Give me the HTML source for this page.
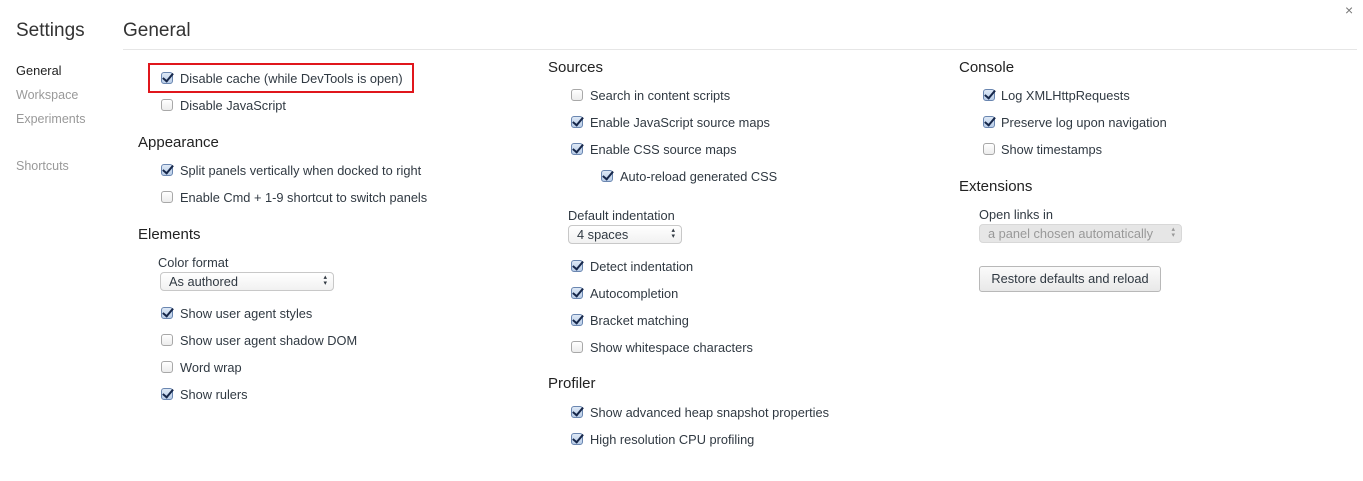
<!DOCTYPE html>
<html><head><style>
*{margin:0;padding:0;box-sizing:border-box}
body{width:1363px;height:481px;background:#fff;font-family:"Liberation Sans",sans-serif;font-size:12.8px;color:#303942;position:relative;overflow:hidden}
.a{position:absolute;white-space:nowrap;line-height:16px;padding-top:1px}
.h{font-size:15px;color:#222}
.nav{color:#999;font-size:12.5px}
.cb{position:absolute;width:12px;height:12px;border:1px solid #a8a8a8;border-radius:3px;background:linear-gradient(#fff,#ececec)}
.cb.c{border-color:#6a86b0;background:linear-gradient(#dde8f6,#b9cde8)}
.cb.c:after{content:"";position:absolute;left:3px;top:-2px;width:4px;height:9px;border:solid #16274a;border-width:0 2px 2px 0;transform:rotate(40deg)}
.sel{position:absolute;height:19px;border:1px solid #c8c8c8;border-radius:4px;background:linear-gradient(#fff,#f1f1f1);padding-left:8px;line-height:17px}
.sel:after{content:"\25B4\A\25BE";white-space:pre;position:absolute;right:6px;top:2px;font-size:7px;line-height:6px}
</style></head><body>
<div class="a" style="left:16px;top:18px;font-size:19px;color:#333;line-height:24px">Settings</div>
<div class="a" style="left:123px;top:18px;font-size:19px;color:#333;line-height:24px">General</div>
<div style="position:absolute;left:123px;top:49px;width:1234px;height:1px;background:#e6e6e6"></div>
<div class="a" style="left:1345px;top:1px;font-size:14px;color:#777">×</div>
<div class="a" style="left:16px;top:62px;color:#222">General</div>
<div class="a nav" style="left:16px;top:86px">Workspace</div>
<div class="a nav" style="left:16px;top:110px">Experiments</div>
<div class="a nav" style="left:16px;top:157px">Shortcuts</div>
<div style="position:absolute;left:148px;top:63px;width:266px;height:30px;border:2px solid #e0161c"></div>

<div class="cb c" style="left:161px;top:72px"></div><div class="a" style="left:180px;top:70px">Disable cache (while DevTools is open)</div>
<div class="cb" style="left:161px;top:99px"></div><div class="a" style="left:180px;top:97px">Disable JavaScript</div>
<div class="a h" style="left:138px;top:134px">Appearance</div>
<div class="cb c" style="left:161px;top:164px"></div><div class="a" style="left:180px;top:162px">Split panels vertically when docked to right</div>
<div class="cb" style="left:161px;top:191px"></div><div class="a" style="left:180px;top:189px">Enable Cmd + 1-9 shortcut to switch panels</div>
<div class="a h" style="left:138px;top:226px">Elements</div>
<div class="a" style="left:158px;top:254px">Color format</div>
<div class="sel" style="left:160px;top:272px;width:174px">As authored</div>
<div class="cb c" style="left:161px;top:307px"></div><div class="a" style="left:180px;top:305px">Show user agent styles</div>
<div class="cb" style="left:161px;top:334px"></div><div class="a" style="left:180px;top:332px">Show user agent shadow DOM</div>
<div class="cb" style="left:161px;top:361px"></div><div class="a" style="left:180px;top:359px">Word wrap</div>
<div class="cb c" style="left:161px;top:388px"></div><div class="a" style="left:180px;top:386px">Show rulers</div>

<div class="a h" style="left:548px;top:59px">Sources</div>
<div class="cb" style="left:571px;top:89px"></div><div class="a" style="left:590px;top:87px">Search in content scripts</div>
<div class="cb c" style="left:571px;top:116px"></div><div class="a" style="left:590px;top:114px">Enable JavaScript source maps</div>
<div class="cb c" style="left:571px;top:143px"></div><div class="a" style="left:590px;top:141px">Enable CSS source maps</div>
<div class="cb c" style="left:601px;top:170px"></div><div class="a" style="left:620px;top:168px">Auto-reload generated CSS</div>
<div class="a" style="left:568px;top:207px">Default indentation</div>
<div class="sel" style="left:568px;top:225px;width:114px">4 spaces</div>
<div class="cb c" style="left:571px;top:260px"></div><div class="a" style="left:590px;top:258px">Detect indentation</div>
<div class="cb c" style="left:571px;top:287px"></div><div class="a" style="left:590px;top:285px">Autocompletion</div>
<div class="cb c" style="left:571px;top:314px"></div><div class="a" style="left:590px;top:312px">Bracket matching</div>
<div class="cb" style="left:571px;top:341px"></div><div class="a" style="left:590px;top:339px">Show whitespace characters</div>
<div class="a h" style="left:548px;top:375px">Profiler</div>
<div class="cb c" style="left:571px;top:406px"></div><div class="a" style="left:590px;top:404px">Show advanced heap snapshot properties</div>
<div class="cb c" style="left:571px;top:433px"></div><div class="a" style="left:590px;top:431px">High resolution CPU profiling</div>

<div class="a h" style="left:959px;top:59px">Console</div>
<div class="cb c" style="left:983px;top:89px"></div><div class="a" style="left:1001px;top:87px">Log XMLHttpRequests</div>
<div class="cb c" style="left:983px;top:116px"></div><div class="a" style="left:1001px;top:114px">Preserve log upon navigation</div>
<div class="cb" style="left:983px;top:143px"></div><div class="a" style="left:1001px;top:141px">Show timestamps</div>
<div class="a h" style="left:959px;top:178px">Extensions</div>
<div class="a" style="left:979px;top:206px">Open links in</div>
<div class="sel" style="left:979px;top:224px;width:203px;background:#e6e6e6;color:#999;border-color:#d8d8d8">a panel chosen automatically</div>
<div style="position:absolute;left:979px;top:266px;width:182px;height:26px;border:1px solid #b8b8b8;border-radius:3px;background:linear-gradient(#fbfbfb,#e8e8e8);text-align:center;line-height:24px">Restore defaults and reload</div>
</body></html>
